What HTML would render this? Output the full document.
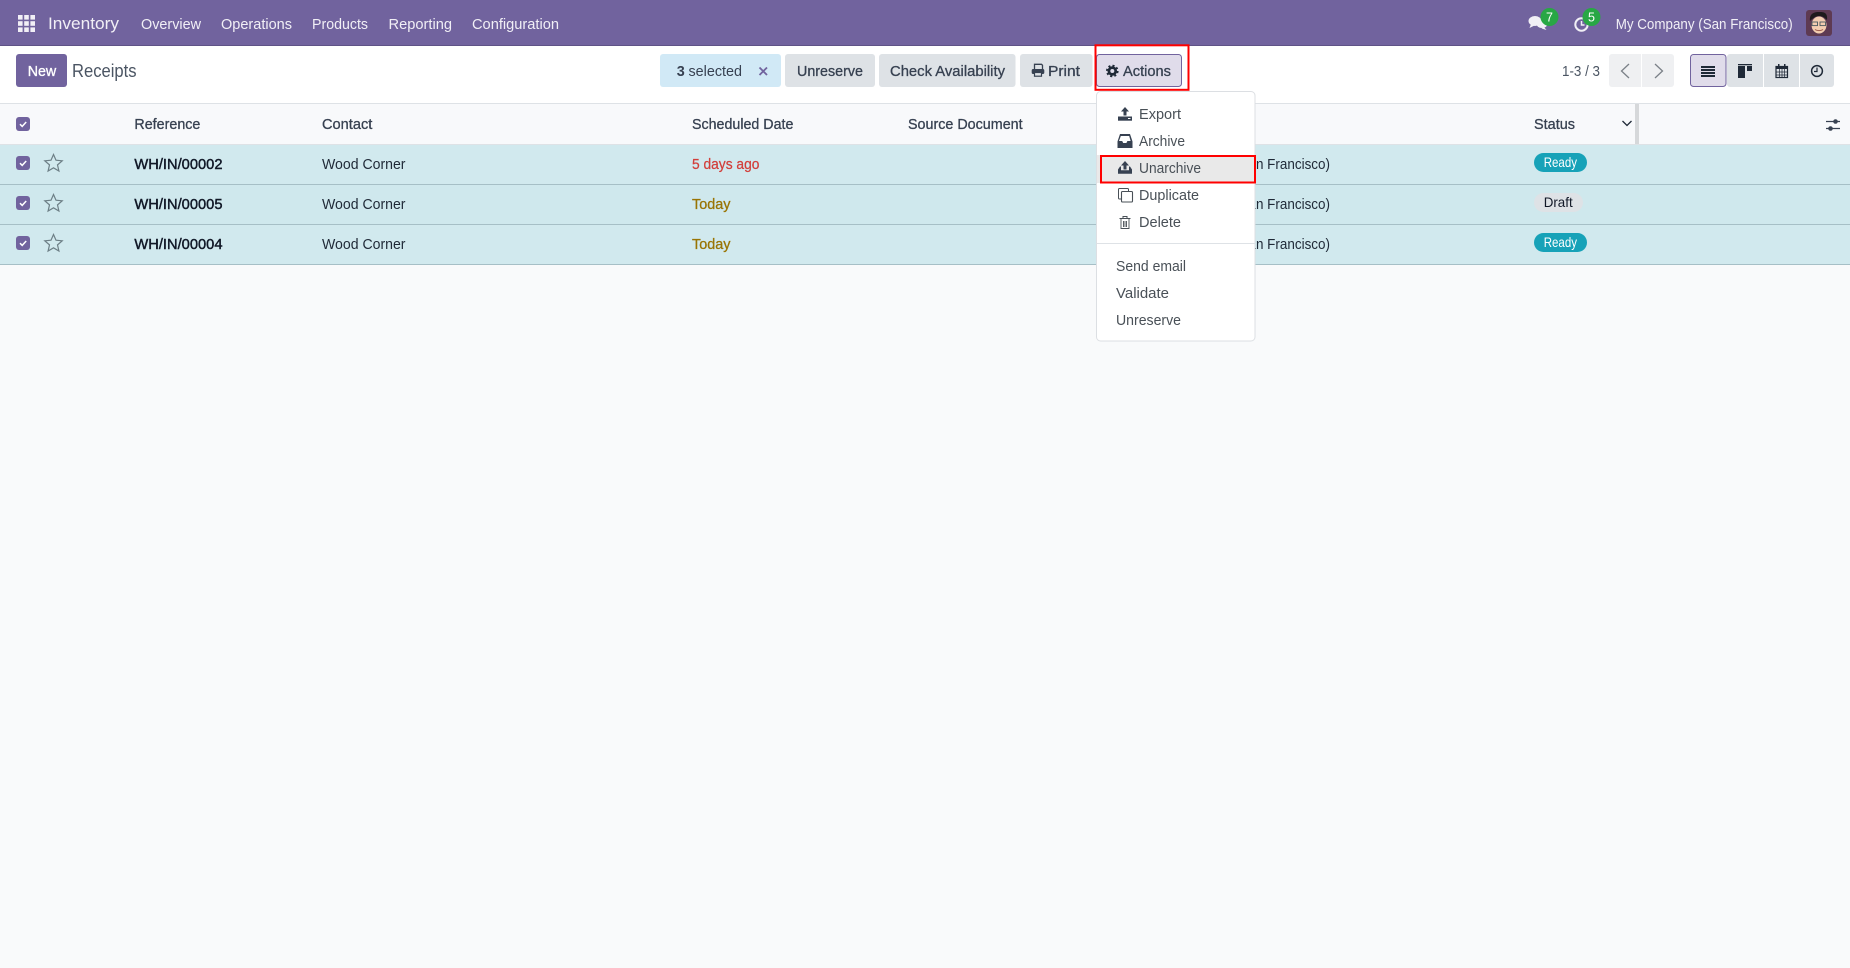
<!DOCTYPE html>
<html lang="en">
<head>
<meta charset="utf-8">
<title>Receipts</title>
<style>
html,body{margin:0;padding:0;width:1850px;height:968px;overflow:hidden;background:#f9fafb}
svg{display:block;position:absolute;left:0;top:0}
text{font-family:"Liberation Sans",Arial,sans-serif;font-size:15px;fill:#374151}
.nav{fill:#f1eff6}
.m{stroke:#374151;stroke-width:.3}
.b{fill:#111827;stroke:#111827;stroke-width:.45}
.dd{fill:#495057}
</style>
</head>
<body>
<svg width="1850" height="968" viewBox="0 0 1850 968" xmlns="http://www.w3.org/2000/svg">
<rect width="1850" height="968" fill="#f9fafb"/>

<!-- navbar -->
<rect width="1850" height="46" fill="#71639e"/>
<rect y="45" width="1850" height="1" fill="#5f5386"/>
<g fill="#f1eff6">
<rect x="18" y="15" width="4.600" height="4.600"/><rect x="24.200" y="15" width="4.600" height="4.600"/><rect x="30.400" y="15" width="4.600" height="4.600"/>
<rect x="18" y="21.200" width="4.600" height="4.600"/><rect x="24.200" y="21.200" width="4.600" height="4.600"/><rect x="30.400" y="21.200" width="4.600" height="4.600"/>
<rect x="18" y="27.400" width="4.600" height="4.600"/><rect x="24.200" y="27.400" width="4.600" height="4.600"/><rect x="30.400" y="27.400" width="4.600" height="4.600"/>
</g>
<text class="nav" x="48" y="29" style="font-size:17px" textLength="71" lengthAdjust="spacingAndGlyphs">Inventory</text>
<text class="nav" x="141" y="29" textLength="60" lengthAdjust="spacingAndGlyphs">Overview</text>
<text class="nav" x="221" y="29" textLength="71" lengthAdjust="spacingAndGlyphs">Operations</text>
<text class="nav" x="312" y="29" textLength="56" lengthAdjust="spacingAndGlyphs">Products</text>
<text class="nav" x="388.500" y="29" textLength="63.500" lengthAdjust="spacingAndGlyphs">Reporting</text>
<text class="nav" x="472" y="29" textLength="87" lengthAdjust="spacingAndGlyphs">Configuration</text>

<!-- systray -->
<ellipse cx="1535" cy="21" rx="6.500" ry="5" fill="#f1eff6"/>
<path d="M1531 24l-1.500 4 5-2.500z" fill="#f1eff6"/>
<ellipse cx="1542" cy="24" rx="5.500" ry="4" fill="#f1eff6"/>
<path d="M1544 27l2.500 3-5-1.500z" fill="#f1eff6"/>
<circle cx="1549.500" cy="17" r="9" fill="#28a745"/>
<text x="1549.500" y="21.500" text-anchor="middle" style="font-size:12.500px;fill:#fff">7</text>
<circle cx="1581.500" cy="24.500" r="6.200" fill="none" stroke="#f1eff6" stroke-width="2"/>
<path d="M1581.500 21v4h3" fill="none" stroke="#f1eff6" stroke-width="1.500"/>
<circle cx="1591.500" cy="17" r="9" fill="#28a745"/>
<text x="1591.500" y="21.500" text-anchor="middle" style="font-size:12.500px;fill:#fff">5</text>
<text class="nav" x="1615.700" y="29" textLength="177" lengthAdjust="spacingAndGlyphs">My Company (San Francisco)</text>
<rect x="1806" y="10" width="26" height="26" rx="3" fill="#5e3a52"/>
<ellipse cx="1819" cy="25" rx="7.500" ry="8.500" fill="#f3cdb0"/>
<path d="M1810 21c-1-8 5-9 9-9s9 0 8 8c-3-3-5-4-8-4s-6 2-9 5z" fill="#1e1a1c"/>
<rect x="1812" y="22" width="5.500" height="3.600" fill="none" stroke="#4a5a60" stroke-width=".9"/>
<rect x="1820" y="22" width="5.500" height="3.600" fill="none" stroke="#4a5a60" stroke-width=".9"/>
<path d="M1815 29.500c2 1.500 6 1.500 8 0" fill="none" stroke="#9c5a4a" stroke-width="1"/>

<!-- control panel -->
<rect y="46" width="1850" height="57" fill="#fff"/>
<rect x="16" y="54" width="51" height="33" rx="3" fill="#71639e"/>
<text x="27.700" y="76" style="fill:#fff;stroke:#fff;stroke-width:.35" textLength="28.500" lengthAdjust="spacingAndGlyphs">New</text>
<text x="72" y="77" style="font-size:18px;fill:#4b5563" textLength="64.500" lengthAdjust="spacingAndGlyphs">Receipts</text>

<rect x="660" y="54" width="121" height="33" rx="3" fill="#d1e9f6"/>
<text x="676.800" y="76" textLength="8" lengthAdjust="spacingAndGlyphs" style="font-weight:bold">3</text>
<text x="688.500" y="76" textLength="53.500" lengthAdjust="spacingAndGlyphs">selected</text>
<path d="M759.500 67.500l7.500 7.500M767 67.500l-7.500 7.500" stroke="#71639e" stroke-width="1.800" fill="none"/>

<rect x="785" y="54" width="90" height="33" rx="3" fill="#dee2e6"/>
<text class="m" x="797" y="76" textLength="66" lengthAdjust="spacingAndGlyphs">Unreserve</text>
<rect x="879" y="54" width="136.500" height="33" rx="3" fill="#dee2e6"/>
<text class="m" x="890" y="76" textLength="115" lengthAdjust="spacingAndGlyphs">Check Availability</text>
<rect x="1020" y="54" width="72.500" height="33" rx="3" fill="#dee2e6"/>
<path d="M1034.500 69v-4.700h7l1 1v3.700" fill="none" stroke="#374151" stroke-width="1.300"/>
<rect x="1031.700" y="69" width="12.600" height="5" rx="1.500" fill="#374151"/>
<rect x="1034.500" y="72.500" width="7" height="3.700" fill="#dee2e6" stroke="#374151" stroke-width="1.200"/>
<text class="m" x="1048" y="76" textLength="32" lengthAdjust="spacingAndGlyphs">Print</text>

<rect x="1096.500" y="54.500" width="85" height="32" rx="3" fill="#e0dcea" stroke="#71639e"/>
<circle cx="1112.300" cy="71" r="3.400" fill="none" stroke="#1f2937" stroke-width="2.800"/>
<circle cx="1112.300" cy="71" r="5.400" fill="none" stroke="#1f2937" stroke-width="1.800" stroke-dasharray="2.100 2.140"/>
<text class="m" x="1123" y="76" textLength="48" lengthAdjust="spacingAndGlyphs">Actions</text>

<text x="1562" y="76" textLength="38" lengthAdjust="spacingAndGlyphs" style="fill:#4b5563">1-3 / 3</text>
<rect x="1609" y="54" width="65" height="33" rx="3" fill="#eff0f2"/>
<rect x="1641" y="54" width="1" height="33" fill="#fff"/>
<path d="M1629 64l-7.500 7 7.500 7" fill="none" stroke="#7b8188" stroke-width="1.300"/>
<path d="M1655 64l7.500 7-7.500 7" fill="none" stroke="#7b8188" stroke-width="1.300"/>

<rect x="1727" y="54" width="107" height="33" rx="3" fill="#dee2e6"/>
<rect x="1763" y="54" width="1" height="33" fill="#fff"/>
<rect x="1799" y="54" width="1" height="33" fill="#fff"/>
<rect x="1690.500" y="54.500" width="35.500" height="32" rx="3" fill="#e0dcea" stroke="#71639e"/>
<g fill="#1f2937">
<rect x="1701" y="66" width="14" height="2"/><rect x="1701" y="69" width="14" height="2"/><rect x="1701" y="72" width="14" height="2"/><rect x="1701" y="75" width="14" height="2"/>
<rect x="1738" y="64" width="14" height="1.300"/><rect x="1738" y="66" width="7" height="12"/><rect x="1747" y="66" width="5" height="5"/>
</g>
<rect x="1776" y="66.500" width="11.500" height="11" fill="none" stroke="#1f2937" stroke-width="1.200"/>
<rect x="1776" y="66" width="12" height="3" fill="#1f2937"/>
<rect x="1778" y="64" width="1.500" height="3.500" fill="#1f2937"/><rect x="1784" y="64" width="1.500" height="3.500" fill="#1f2937"/>
<path d="M1776 72h12M1776 75h12M1779.500 69v8M1782 69v8M1784.500 69v8" stroke="#1f2937" stroke-width=".7"/>
<circle cx="1817" cy="71" r="5.400" fill="none" stroke="#1f2937" stroke-width="1.500"/>
<path d="M1817 67.500v4h-3" fill="none" stroke="#1f2937" stroke-width="1.200"/>

<!-- table header -->
<rect y="103" width="1850" height="1" fill="#dee2e6"/>
<rect y="104" width="1850" height="40" fill="#f8f9fb"/>
<rect y="144" width="1850" height="1" fill="#dee2e6"/>
<rect x="16" y="117" width="14" height="14" rx="3" fill="#71639e"/>
<path d="M20 124.200l2.200 2.200 4-4.400" fill="none" stroke="#fff" stroke-width="1.500"/>
<text class="m" x="134.400" y="129" textLength="66" lengthAdjust="spacingAndGlyphs">Reference</text>
<text class="m" x="322" y="129" textLength="50.300" lengthAdjust="spacingAndGlyphs">Contact</text>
<text class="m" x="692" y="129" textLength="101.400" lengthAdjust="spacingAndGlyphs">Scheduled Date</text>
<text class="m" x="908" y="129" textLength="114.600" lengthAdjust="spacingAndGlyphs">Source Document</text>
<text class="m" x="1534" y="129" textLength="41" lengthAdjust="spacingAndGlyphs">Status</text>
<path d="M1622.500 121l4.500 4.500 4.500-4.500" fill="none" stroke="#1f2937" stroke-width="1.300"/>
<rect x="1635" y="104" width="4" height="40" fill="#d6d8da"/>
<path d="M1826 121.500h14M1826 128.500h14" stroke="#374151" stroke-width="1.200"/>
<circle cx="1835.500" cy="121.500" r="2.300" fill="#374151"/>
<circle cx="1830.500" cy="128.500" r="2.300" fill="#374151"/>

<!-- rows -->
<rect y="145" width="1850" height="39" fill="#d1e9ee"/>
<rect y="184" width="1850" height="1" fill="#a6bfc6"/>
<rect y="185" width="1850" height="39" fill="#cfe8ed"/>
<rect y="224" width="1850" height="1" fill="#a6bfc6"/>
<rect y="225" width="1850" height="39" fill="#d1e9ee"/>
<rect y="264" width="1850" height="1" fill="#a6bfc6"/>

<g>
<rect x="16" y="156" width="14" height="14" rx="3" fill="#71639e"/>
<path d="M20 163.200l2.200 2.200 4-4.400" fill="none" stroke="#fff" stroke-width="1.500"/>
<path d="M53.500 154.500l2.500 5.700 6.200.6-4.700 4.100 1.400 6.100-5.400-3.200-5.400 3.200 1.400-6.100-4.700-4.100 6.200-.6z" fill="none" stroke="#6d7f86" stroke-width="1.200"/>
<text class="b" x="134.400" y="169" textLength="88.100" lengthAdjust="spacingAndGlyphs">WH/IN/00002</text>
<text x="322" y="169" style="fill:#1f2937" textLength="83.500" lengthAdjust="spacingAndGlyphs">Wood Corner</text>
<text x="692" y="169" style="fill:#d23f3a;stroke:#d23f3a;stroke-width:.25" textLength="67.400" lengthAdjust="spacingAndGlyphs">5 days ago</text>
<text x="1152" y="169" style="fill:#1f2937" textLength="178" lengthAdjust="spacingAndGlyphs">My Company (San Francisco)</text>
<rect x="1534" y="153" width="53" height="19" rx="9.500" fill="#17a2b8"/>
<text x="1543.700" y="167" style="font-size:14px;fill:#fff" textLength="33.300" lengthAdjust="spacingAndGlyphs">Ready</text>
</g>
<g>
<rect x="16" y="196" width="14" height="14" rx="3" fill="#71639e"/>
<path d="M20 203.200l2.200 2.200 4-4.400" fill="none" stroke="#fff" stroke-width="1.500"/>
<path d="M53.500 194.500l2.500 5.700 6.200.6-4.700 4.100 1.400 6.100-5.400-3.200-5.400 3.200 1.400-6.100-4.700-4.100 6.200-.6z" fill="none" stroke="#6d7f86" stroke-width="1.200"/>
<text class="b" x="134.400" y="209" textLength="88.100" lengthAdjust="spacingAndGlyphs">WH/IN/00005</text>
<text x="322" y="209" style="fill:#1f2937" textLength="83.500" lengthAdjust="spacingAndGlyphs">Wood Corner</text>
<text x="692" y="209" style="fill:#997404;stroke:#997404;stroke-width:.3" textLength="38.500" lengthAdjust="spacingAndGlyphs">Today</text>
<text x="1152" y="209" style="fill:#1f2937" textLength="178" lengthAdjust="spacingAndGlyphs">My Company (San Francisco)</text>
<rect x="1534" y="193" width="49" height="19" rx="9.500" fill="#dee2e6"/>
<text x="1543.700" y="207" style="font-size:14px;fill:#111827" textLength="29" lengthAdjust="spacingAndGlyphs">Draft</text>
</g>
<g>
<rect x="16" y="236" width="14" height="14" rx="3" fill="#71639e"/>
<path d="M20 243.200l2.200 2.200 4-4.400" fill="none" stroke="#fff" stroke-width="1.500"/>
<path d="M53.500 234.500l2.500 5.700 6.200.6-4.700 4.100 1.400 6.100-5.400-3.200-5.400 3.200 1.400-6.100-4.700-4.100 6.200-.6z" fill="none" stroke="#6d7f86" stroke-width="1.200"/>
<text class="b" x="134.400" y="249" textLength="88.100" lengthAdjust="spacingAndGlyphs">WH/IN/00004</text>
<text x="322" y="249" style="fill:#1f2937" textLength="83.500" lengthAdjust="spacingAndGlyphs">Wood Corner</text>
<text x="692" y="249" style="fill:#997404;stroke:#997404;stroke-width:.3" textLength="38.500" lengthAdjust="spacingAndGlyphs">Today</text>
<text x="1152" y="249" style="fill:#1f2937" textLength="178" lengthAdjust="spacingAndGlyphs">My Company (San Francisco)</text>
<rect x="1534" y="233" width="53" height="19" rx="9.500" fill="#17a2b8"/>
<text x="1543.700" y="247" style="font-size:14px;fill:#fff" textLength="33.300" lengthAdjust="spacingAndGlyphs">Ready</text>
</g>

<!-- dropdown -->
<rect x="1096.500" y="91.500" width="158.500" height="249.500" rx="4" fill="#fff" stroke="#dcdfe3"/>
<rect x="1097" y="155" width="158" height="28" fill="#e9e9e9"/>
<rect y="243" x="1097" width="158" height="1" fill="#dee2e6"/>

<path d="M1125 107l-4 4.500h2.500v4h3v-4h2.500z" fill="#374151"/>
<path d="M1118 116.500h14v4.200h-14z" fill="#374151"/>
<rect x="1128" y="118" width="2.500" height="1" fill="#fff"/>
<path d="M1120 134h10l2.500 7.500v6.500h-15v-6.500z" fill="#374151"/>
<path d="M1120.800 136h8.400l1.400 5h-3.200l-1 2h-3.200l-1-2h-3.200z" fill="#fff"/>
<path d="M1125 161l-4 4.500h2.500v4h3v-4h2.500z" fill="#374151"/>
<path d="M1120 166.500h1v3.800h8v-3.800h1l2 3v4.200h-14v-4.200z" fill="#374151"/>
<rect x="1118.500" y="188.500" width="10" height="10.500" rx="1" fill="none" stroke="#495057" stroke-width="1"/>
<rect x="1121.500" y="191.500" width="11" height="10.500" rx="1" fill="#fff" stroke="#495057" stroke-width="1.100"/>
<path d="M1119.500 218.500h11M1123 218v-1.500h4v1.500" fill="none" stroke="#495057" stroke-width="1"/>
<path d="M1121 219v9.500h8V219M1123.500 221v6M1125 221v6M1126.500 221v6" fill="none" stroke="#495057" stroke-width=".9"/>

<text class="dd" x="1139" y="119" textLength="42" lengthAdjust="spacingAndGlyphs">Export</text>
<text class="dd" x="1139" y="146" textLength="46" lengthAdjust="spacingAndGlyphs">Archive</text>
<text class="dd" x="1139" y="173" textLength="62" lengthAdjust="spacingAndGlyphs">Unarchive</text>
<text class="dd" x="1139" y="200" textLength="60" lengthAdjust="spacingAndGlyphs">Duplicate</text>
<text class="dd" x="1139" y="227" textLength="42" lengthAdjust="spacingAndGlyphs">Delete</text>
<text class="dd" x="1116" y="271" textLength="70" lengthAdjust="spacingAndGlyphs">Send email</text>
<text class="dd" x="1116" y="298" textLength="53" lengthAdjust="spacingAndGlyphs">Validate</text>
<text class="dd" x="1116" y="325" textLength="65" lengthAdjust="spacingAndGlyphs">Unreserve</text>

<!-- red annotation boxes -->
<rect x="1095.500" y="45.300" width="93" height="44.500" fill="none" stroke="#f00" stroke-width="2"/>
<rect x="1101" y="156" width="154" height="26.500" fill="none" stroke="#f00" stroke-width="2"/>
</svg>
</body>
</html>
